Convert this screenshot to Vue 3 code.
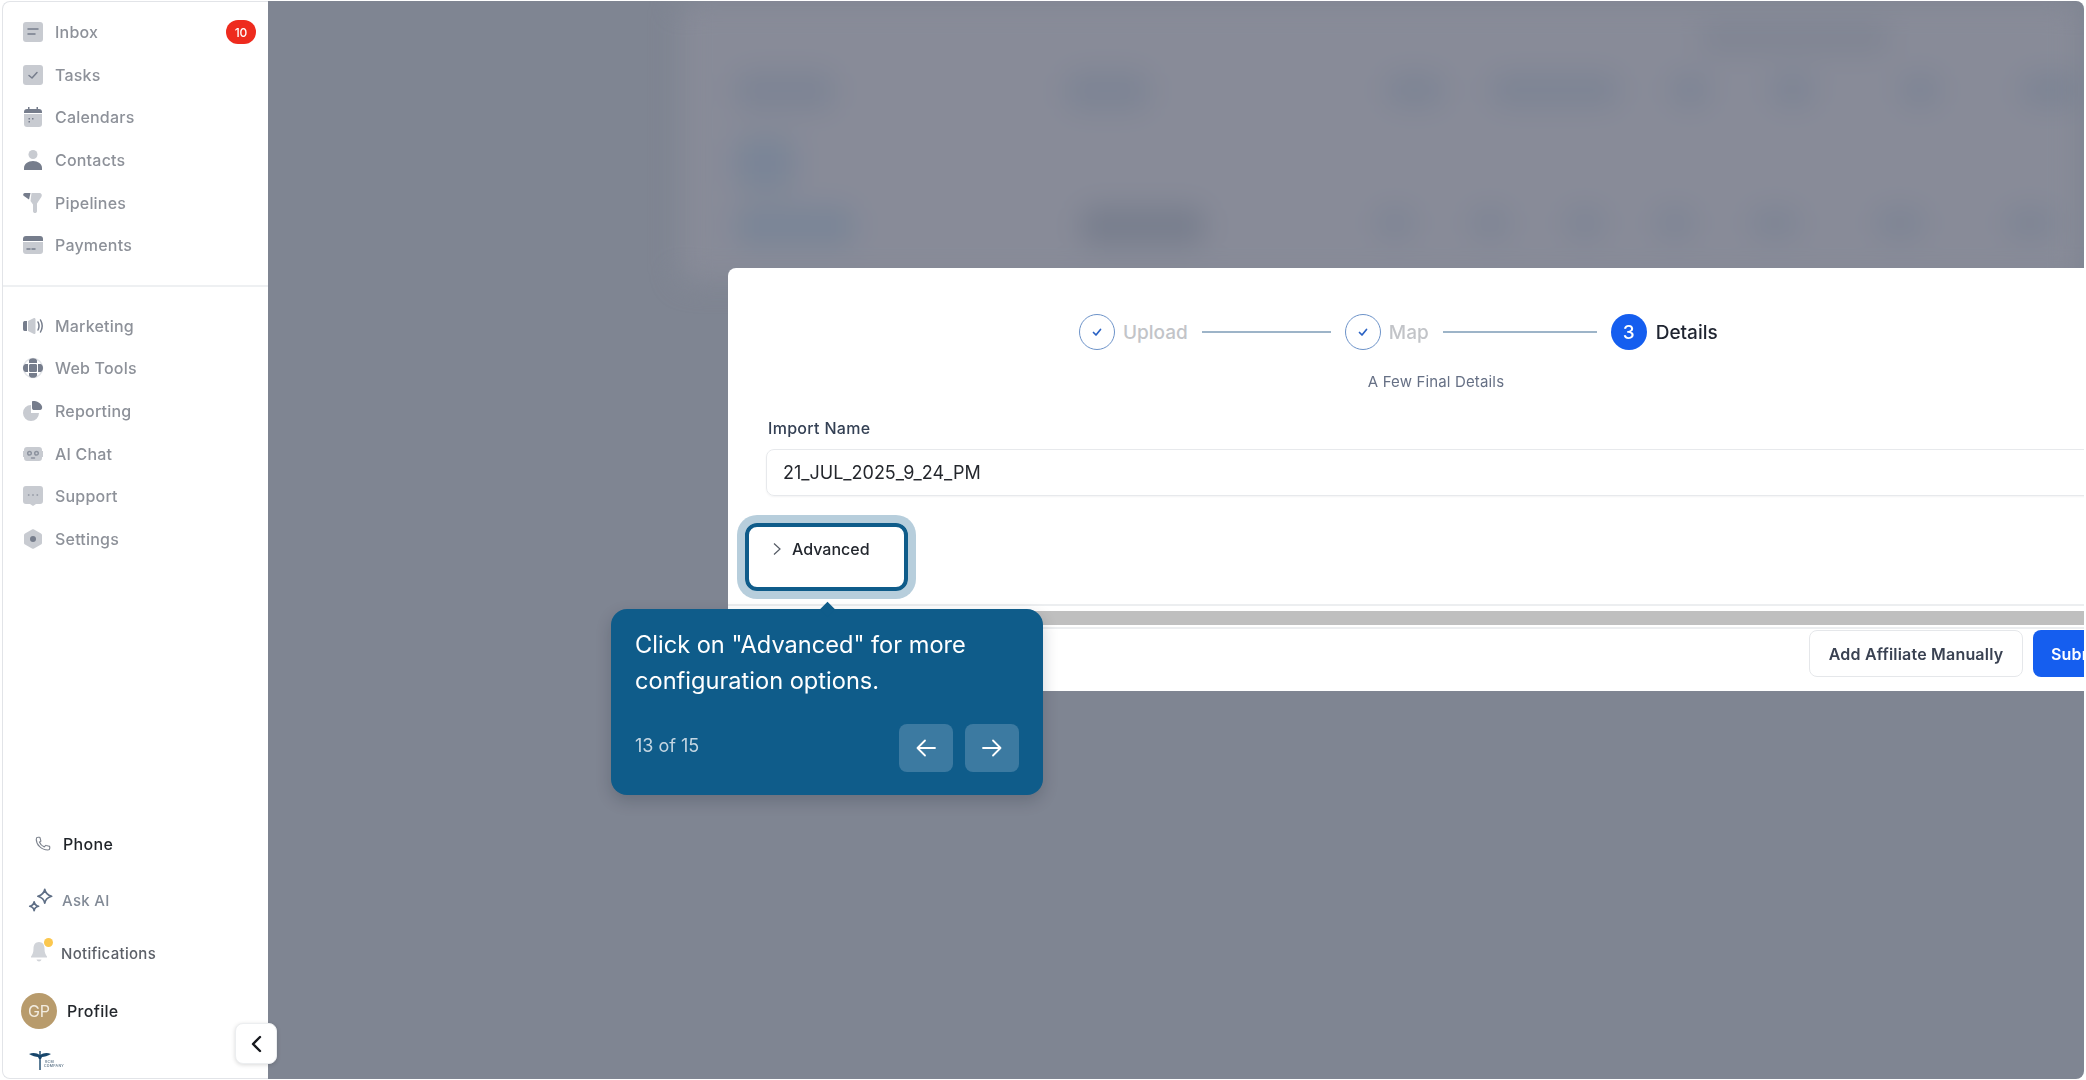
<template>
  <div class="frame">
    <aside class="sidebar">
      <div class="soft">
        <nav class="nav-group">
          <a v-for="item in topItems" :key="item.label" class="nav-item">
            <svg class="nav-icon" viewBox="0 0 20 20">
              <path v-for="(shape, i) in item.shapes" :key="i" :d="shape.d" :fill="shape.fill || 'none'" :stroke="shape.stroke || 'none'" stroke-linecap="round" stroke-linejoin="round" />
            </svg>
            <span>{{ item.label }}</span>
            <span v-if="item.badge" class="badge">{{ item.badge }}</span>
          </a>
        </nav>
        <div class="nav-divider"></div>
        <nav class="nav-group">
          <a v-for="item in midItems" :key="item.label" class="nav-item">
            <svg class="nav-icon" viewBox="0 0 20 20">
              <path v-for="(shape, i) in item.shapes" :key="i" :d="shape.d" :fill="shape.fill || 'none'" :stroke="shape.stroke || 'none'" stroke-linecap="round" stroke-linejoin="round" />
            </svg>
            <span>{{ item.label }}</span>
          </a>
        </nav>

        <div class="bottom">
          <div class="bottom-row phone">
            <svg width="18" height="18" viewBox="0 0 24 24" fill="none" stroke="#7c828d" stroke-width="1.5" stroke-linejoin="round">
              <path d="M3 5.5C3 4 4.2 3 5.5 3h1.6c.5 0 .9.3 1 .8l1 3.9c.1.4 0 .8-.3 1L7.2 9.300c1.100 3 3.500 5.400 6.500 6.500l1.600-1.600c.3-.3.700-.4 1-.3l3.900 1c.5.100.8.500.8 1v1.600c0 1.300-1 2.500-2.500 2.500C10 20 3 13 3 5.500z" />
            </svg>
            <span>Phone</span>
          </div>
          <div class="bottom-row ask">
            <svg width="30" height="30" viewBox="0 0 24 24" fill="none" stroke="#5f6f86" stroke-width="1.4" stroke-linejoin="round">
              <path d="M15 3.500c.5 3 2 4.500 5.500 5.500-3.500 1-5 2.500-5.500 5.500-.5-3-2-4.500-5.500-5.500 3.500-1 5-2.500 5.500-5.500z" />
              <path d="M6.500 13.500c.3 2 1.300 3 3.500 3.500-2.200.5-3.200 1.500-3.500 3.500-.3-2-1.300-3-3.500-3.500 2.200-.5 3.200-1.500 3.500-3.500z" />
            </svg>
            <span>Ask AI</span>
          </div>
          <div class="bottom-row notif">
            <div class="bell">
              <svg width="18" height="22" viewBox="0 0 18 22">
                <path d="M9 1c3.500 0 5.500 2.800 5.500 6.500 0 4 1 6 2.500 8v1H1v-1c1.500-2 2.500-4 2.500-8C3.500 3.800 5.500 1 9 1z" fill="#d1d4d9" />
                <path d="M6.500 18.500h5c-.4 1.300-1.300 2-2.500 2s-2.100-.7-2.500-2z" fill="#d1d4d9" />
              </svg>
              <i class="bell-dot"></i>
            </div>
            <span>Notifications</span>
          </div>
          <div class="bottom-row profile">
            <div class="avatar">GP</div>
            <span>Profile</span>
          </div>
          <div class="logo-row">
            <svg width="36" height="22" viewBox="0 0 36 22">
              <path d="M0 5c4-2 8-1 11 1 3-2 7-3 11-1-3 2-7 3-9 3l-1 2h-2l-1-2C7 8 3 7 0 5z" fill="#17466b" />
              <path d="M11 2v19" stroke="#17466b" stroke-width="1.400" />
              <text x="16" y="14" font-size="3.500" fill="#526b80" font-family="Inter">RCM</text>
              <text x="15" y="18" font-size="3.500" fill="#526b80" font-family="Inter">COMPANY</text>
            </svg>
          </div>
        </div>
      </div>
      <button class="collapse">
        <svg width="14" height="20" viewBox="0 0 14 20" fill="none" stroke="#16181d" stroke-width="2.400" stroke-linecap="round" stroke-linejoin="round">
          <path d="M11 3 4 10l7 7" />
        </svg>
      </button>
    </aside>

    <main class="stage">
      <div class="blurred">
        <i v-for="(blob, i) in blobs" :key="i" class="blob" :style="blob"></i>
      </div>

      <section class="modal">
        <div class="stepper">
          <span class="step-circle done"><svg width="14" height="14" viewBox="0 0 14 14" fill="none" stroke="#2a62c4" stroke-width="1.700" stroke-linecap="round" stroke-linejoin="round"><path d="M3.500 7.500 6 10l4.500-5.500" /></svg></span>
          <span class="step-name upload">Upload</span>
          <span class="step-line line-a"></span>
          <span class="step-circle done"><svg width="14" height="14" viewBox="0 0 14 14" fill="none" stroke="#2a62c4" stroke-width="1.700" stroke-linecap="round" stroke-linejoin="round"><path d="M3.500 7.500 6 10l4.500-5.500" /></svg></span>
          <span class="step-name map">Map</span>
          <span class="step-line line-b"></span>
          <span class="step-circle current">3</span>
          <span class="step-name active">Details</span>
        </div>
        <p class="step-sub">A Few Final Details</p>
        <label class="field-label">Import Name</label>
        <div class="field-input">21_JUL_2025_9_24_PM</div>
        <div class="advanced">
          <svg width="10" height="14" viewBox="0 0 10 14" fill="none" stroke="#555b65" stroke-width="1.200"><path d="M2 1.500 8 7l-6 5.500" /></svg>
          <span>Advanced</span>
        </div>
        <div class="scroll-area">
          <div class="scroll-thumb"></div>
        </div>
        <div class="actions">
          <button class="btn-outline">Add Affiliate Manually</button>
          <button class="btn-primary">Submit</button>
        </div>
      </section>

      <div class="highlight"></div>

      <div class="tour-card">
        <i class="tour-arrow"></i>
        <p class="tour-text">Click on "Advanced" for more configuration options.</p>
        <div class="tour-footer">
          <span class="tour-count">13 of 15</span>
          <div class="tour-buttons">
            <button class="tour-btn">
              <svg width="22" height="20" viewBox="0 0 22 20" fill="none" stroke="#fff" stroke-width="1.800" stroke-linecap="round" stroke-linejoin="round"><path d="M20 10H2.500M10 2.500 2.500 10l7.500 7.500" /></svg>
            </button>
            <button class="tour-btn">
              <svg width="22" height="20" viewBox="0 0 22 20" fill="none" stroke="#fff" stroke-width="1.800" stroke-linecap="round" stroke-linejoin="round"><path d="M2 10h17.500M12 2.500l7.500 7.500-7.500 7.500" /></svg>
            </button>
          </div>
        </div>
      </div>
    </main>
  </div>
</template>

<script setup>
const light = '#c8cbd1'
const dark = '#767d8c'

const topItems = [
  {
    label: 'Inbox',
    badge: 10,
    shapes: [
      { d: 'M3 0h14a3 3 0 0 1 3 3v14a3 3 0 0 1-3 3H3a3 3 0 0 1-3-3V3a3 3 0 0 1 3-3z', fill: light },
      { d: 'M5 7h10M5 12h7', stroke: dark }
    ]
  },
  {
    label: 'Tasks',
    shapes: [
      { d: 'M3 0h14a3 3 0 0 1 3 3v14a3 3 0 0 1-3 3H3a3 3 0 0 1-3-3V3a3 3 0 0 1 3-3z', fill: light },
      { d: 'M6 10.500 9 13l5-5.500', stroke: dark }
    ]
  },
  {
    label: 'Calendars',
    shapes: [
      { d: 'M1 7h18v10a3 3 0 0 1-3 3H4a3 3 0 0 1-3-3z', fill: light },
      { d: 'M1 6V5a3 3 0 0 1 3-3h1V0h1.500v2h7V0H15v2h1a3 3 0 0 1 3 3v1z', fill: dark },
      { d: 'M5.500 11h1.500v1.500H5.500zM9 11h1.500v1.500H9zM5.500 14h1.500v1.500H5.500z', fill: dark }
    ]
  },
  {
    label: 'Contacts',
    shapes: [
      { d: 'M10 0a4.500 4.500 0 1 1 0 9 4.500 4.500 0 0 1 0-9z', fill: light },
      { d: 'M1 20v-2c0-4 4-7 9-7s9 3 9 7v2z', fill: dark }
    ]
  },
  {
    label: 'Pipelines',
    shapes: [
      { d: 'M8.500 0H16c2.500 0 3.500 2 2.300 4L14 10.500v7.500c0 2.800-4 2.800-4 0v-6.500L7.500 8z', fill: light },
      { d: 'M2 0h5.500L6 6.500 .6 2.800C-.4 1.800.4 0 2 0z', fill: dark }
    ]
  },
  {
    label: 'Payments',
    shapes: [
      { d: 'M0 7h20v9a3 3 0 0 1-3 3H3a3 3 0 0 1-3-3z', fill: light },
      { d: 'M3 1h14a3 3 0 0 1 3 3v2H0V4a3 3 0 0 1 3-3z', fill: dark },
      { d: 'M4 14h3M9 14h3', stroke: dark }
    ]
  }
]

const midItems = [
  {
    label: 'Marketing',
    shapes: [
      { d: 'M0 7c0-1 .6-2 1.500-2H4v10H1.500C.6 15 0 14 0 13z', fill: dark },
      { d: 'M5 5l6-3c1 0 1.500.5 1.500 1.500v13c0 1-.5 1.500-1.500 1.500l-6-3z', fill: light },
      { d: 'M15 6c1.300 2.500 1.300 5.500 0 8M17.500 4c2 3.500 2 8.500 0 12', stroke: dark }
    ]
  },
  {
    label: 'Web Tools',
    shapes: [
      { d: 'M10 .5a9.500 9.500 0 1 1 0 19 9.500 9.500 0 0 1 0-19z', stroke: '#e3e5e9' },
      { d: 'M10 .2c2 0 3.500.8 4 2.300V5H6V2.500C6.500 1 8 .2 10 .2zM6 15h8v2.500c-.5 1.500-2 2.300-4 2.300s-3.500-.8-4-2.300zM0 10c0-2 .8-3.500 2.500-4H5v8H2.500C.8 13.500 0 12 0 10zM20 10c0-2-.8-3.500-2.500-4H15v8h2.500c1.700-.5 2.500-2 2.500-4zM7.500 6h5c1 0 1.500.5 1.500 1.500v5c0 1-.5 1.500-1.500 1.500h-5c-1 0-1.500-.5-1.500-1.500v-5C6 6.500 6.500 6 7.500 6z', fill: dark }
    ]
  },
  {
    label: 'Reporting',
    shapes: [
      { d: 'M8 4a8 8 0 1 0 8 8H8z', fill: light },
      { d: 'M10 0c4 0 8 2 9 5.500.5 2-.5 3.500-2 3.500H11c-1 0-2-.5-2-2V1c0-.6.400-1 1-1z', fill: dark }
    ]
  },
  {
    label: 'AI Chat',
    shapes: [
      { d: 'M4 3h12a3 3 0 0 1 3 3v1h1v6h-1v1a3 3 0 0 1-3 3H4a3 3 0 0 1-3-3v-1H0V7h1V6a3 3 0 0 1 3-3z', fill: light },
      { d: 'M6.500 7.500a1.800 1.800 0 1 1 0 3.600 1.800 1.800 0 0 1 0-3.600zM13.500 7.500a1.800 1.800 0 1 1 0 3.600 1.800 1.800 0 0 1 0-3.600zM8.500 14h3', stroke: '#8d939f' }
    ]
  },
  {
    label: 'Support',
    shapes: [
      { d: 'M3 0h14a3 3 0 0 1 3 3v12a3 3 0 0 1-3 3h-4l-3 2-3-2H3a3 3 0 0 1-3-3V3a3 3 0 0 1 3-3z', fill: light },
      { d: 'M5.500 9h.4M9.800 9h.4M14.100 9h.4', stroke: '#8d939f' }
    ]
  },
  {
    label: 'Settings',
    shapes: [
      { d: 'M9 .5c.6-.3 1.400-.3 2 0l7 4c.6.3 1 .9 1 1.600v7.800c0 .7-.4 1.300-1 1.600l-7 4c-.6.3-1.400.3-2 0l-7-4c-.6-.3-1-.9-1-1.600V6.100c0-.7.4-1.300 1-1.600z', fill: light },
      { d: 'M10 7a3 3 0 1 1 0 6 3 3 0 0 1 0-6z', fill: dark }
    ]
  }
]

function blob(x, y, w, h, color) {
  return {
    left: x - 268 + 'px',
    top: y + 'px',
    width: w + 'px',
    height: h + 'px',
    background: color
  }
}

const soft = '#7d8494'
const blue = '#7a8597'

const blobs = [
  blob(680, 0, 1400, 280, '#888b98'),
  blob(1700, 20, 190, 34, '#808593'),
  blob(735, 70, 100, 40, soft),
  blob(1065, 70, 85, 40, soft),
  blob(1385, 72, 60, 34, soft),
  blob(1490, 72, 130, 34, soft),
  blob(1670, 72, 40, 34, soft),
  blob(1770, 72, 45, 34, soft),
  blob(1900, 72, 40, 34, soft),
  blob(2020, 72, 60, 34, soft),
  blob(735, 135, 60, 55, blue),
  blob(735, 205, 120, 40, blue),
  blob(1080, 205, 125, 40, '#787e8d'),
  blob(1375, 207, 40, 30, soft),
  blob(1470, 207, 40, 30, soft),
  blob(1565, 207, 40, 30, soft),
  blob(1655, 207, 40, 30, soft),
  blob(1750, 207, 50, 30, soft),
  blob(1875, 207, 50, 30, soft),
  blob(2005, 207, 50, 30, soft)
]
</script>

<style>
body {
  background: #fff;
}
</style>

<style scoped>
.frame {
  box-sizing: border-box;
  width: 2086px;
  height: 1080px;
  padding: 1px 2px 1px 2px;
  display: flex;
  font-family: Inter, "Liberation Sans", sans-serif;
}

.sidebar {
  box-sizing: border-box;
  width: 266px;
  flex: none;
  position: relative;
  background: #fff;
  border: 1px solid #e2e4e8;
  border-right: none;
  border-radius: 8px 0 0 8px;
}

.soft {
  height: 100%;
  box-sizing: border-box;
  padding-top: 9px;
  display: flex;
  flex-direction: column;
  filter: blur(0.4px);
}

.nav-group {
  display: flex;
  flex-direction: column;
}

.nav-item {
  height: 42.600px;
  display: flex;
  align-items: center;
  gap: 12px;
  padding: 0 12px 0 20px;
  font-size: 16px;
  font-weight: 500;
  letter-spacing: 0.2px;
  color: #8d9199;
}

.nav-icon {
  width: 20px;
  height: 20px;
  flex: none;
  overflow: visible;
  stroke-width: 1.500;
}

.badge {
  margin-left: auto;
  width: 30px;
  height: 24px;
  border-radius: 12px;
  background: #ee2b1e;
  color: #fff;
  font-size: 12px;
  letter-spacing: 0;
  display: flex;
  align-items: center;
  justify-content: center;
}

.nav-divider {
  height: 2px;
  margin: 18px 0 18px;
  background: #eef0f2;
}

.bottom {
  margin-top: auto;
  display: flex;
  flex-direction: column;
  font-size: 15px;
  font-weight: 500;
  letter-spacing: 0.3px;
}

.bottom-row {
  display: flex;
  align-items: center;
}

.phone {
  height: 24px;
  padding-left: 31px;
  gap: 11px;
  font-size: 16px;
  color: #1f2328;
  margin-bottom: 32px;
}

.ask {
  height: 24px;
  padding-left: 23px;
  gap: 6px;
  color: #828a96;
  margin-bottom: 29px;
}

.notif {
  height: 24px;
  padding-left: 27px;
  gap: 12px;
  color: #5c6068;
  margin-bottom: 28px;
}

.bell {
  position: relative;
  width: 19px;
  height: 24px;
}

.bell-dot {
  position: absolute;
  left: 14px;
  top: -3px;
  width: 9px;
  height: 9px;
  border-radius: 50%;
  background: #fbc74e;
}

.profile {
  height: 36px;
  padding-left: 18px;
  gap: 10px;
  font-size: 16px;
  color: #23272c;
}

.avatar {
  width: 36px;
  height: 36px;
  border-radius: 50%;
  background: #b89b6c;
  color: #f2ece0;
  font-size: 16px;
  font-weight: 400;
  letter-spacing: 0;
  display: flex;
  align-items: center;
  justify-content: center;
}

.logo-row {
  padding: 20px 0 7px 26px;
  height: 22px;
}

.collapse {
  position: absolute;
  right: -9px;
  bottom: 14px;
  z-index: 3;
  width: 42px;
  height: 41px;
  padding: 0;
  border: 1px solid #eceef0;
  border-radius: 8px;
  background: #fff;
  box-shadow: 0 1px 4px rgba(0, 0, 0, 0.15);
  display: flex;
  align-items: center;
  justify-content: center;
}

.stage {
  flex: 1;
  position: relative;
  overflow: hidden;
  background: #7f8592;
  border-radius: 0 8px 8px 0;
}

.blurred {
  position: absolute;
  inset: 0;
  filter: blur(14px);
}

.blob {
  position: absolute;
  border-radius: 14px;
}

.modal {
  position: absolute;
  left: 460px;
  top: 267px;
  box-sizing: border-box;
  width: 1416px;
  height: 423px;
  padding-top: 46px;
  background: #fff;
  border-radius: 8px 8px 0 0;
  display: flex;
  flex-direction: column;
  filter: blur(0.35px);
}

.stepper {
  height: 36px;
  padding-left: 351px;
  display: flex;
  align-items: center;
  font-size: 19px;
  font-weight: 500;
}

.step-circle {
  box-sizing: border-box;
  width: 36px;
  height: 36px;
  flex: none;
  border-radius: 50%;
  display: flex;
  align-items: center;
  justify-content: center;
}

.done {
  border: 1.500px solid #6d93c9;
}

.current {
  background: #155eef;
  color: #fff;
}

.step-name {
  color: #c2c4c8;
  margin-left: 8px;
}

.step-name.active {
  color: #1f2430;
  margin-left: 9px;
}

.step-line {
  height: 2px;
  background: #9db4c8;
  margin: 0 14px;
}

.line-a {
  width: 129px;
}

.line-b {
  width: 154px;
}

.step-sub {
  margin: 22px 0 0;
  text-align: center;
  font-size: 15px;
  line-height: 20px;
  letter-spacing: 0.15px;
  color: #667085;
}

.field-label {
  margin: 26px 0 0 40px;
  font-size: 16px;
  line-height: 20px;
  font-weight: 500;
  letter-spacing: 0.3px;
  color: #344054;
}

.field-input {
  box-sizing: border-box;
  margin: 11px 0 0 38px;
  height: 47px;
  padding: 0 16px;
  display: flex;
  align-items: center;
  border: 1.500px solid #e7e9ec;
  border-radius: 8px;
  font-size: 18px;
  color: #24272d;
  box-shadow: 0 1px 2px rgba(16, 24, 40, 0.05);
}

.advanced {
  margin: 43px 0 0 44px;
  height: 20px;
  display: flex;
  align-items: center;
  gap: 10px;
  font-size: 16px;
  font-weight: 500;
  line-height: 20px;
  color: #23272e;
}

.scroll-area {
  margin-top: 45px;
  height: 16px;
  border-top: 2px solid #eceef0;
  padding-top: 5px;
  border-bottom: 2px solid #eceef0;
}

.scroll-thumb {
  height: 14px;
  background: #bfbfbf;
}

.actions {
  display: flex;
  gap: 10px;
  padding-left: 1081px;
  margin-top: 1px;
}

.btn-outline,
.btn-primary {
  height: 47px;
  border-radius: 8px;
  font-family: inherit;
  font-size: 16px;
  font-weight: 600;
  letter-spacing: 0.2px;
  white-space: nowrap;
}

.btn-outline {
  width: 214px;
  padding: 0;
  background: #fff;
  border: 1.500px solid #e5e7ea;
  color: #3a4252;
}

.btn-primary {
  padding: 0 18px;
  background: #155eef;
  border: none;
  color: #fff;
}

.highlight {
  position: absolute;
  left: 477px;
  top: 522px;
  box-sizing: border-box;
  width: 163px;
  height: 68px;
  border: 4px solid #0f5c8a;
  border-radius: 12px;
  box-shadow: 0 0 0 8px rgba(15, 92, 138, 0.3);
}

.tour-card {
  position: absolute;
  left: 343px;
  top: 608px;
  box-sizing: border-box;
  width: 432px;
  height: 186px;
  padding: 18px 24px 0;
  background: #0f5c8a;
  border-radius: 16px;
  box-shadow: 0 6px 16px rgba(16, 24, 40, 0.2);
  color: #fff;
}

.tour-arrow {
  position: absolute;
  left: 211px;
  top: -5px;
  width: 11px;
  height: 11px;
  background: #0f5c8a;
  transform: rotate(45deg);
}

.tour-text {
  margin: 0;
  font-size: 23.600px;
  line-height: 36px;
}

.tour-footer {
  margin-top: 25px;
  display: flex;
  align-items: center;
  justify-content: space-between;
}

.tour-count {
  font-size: 18px;
  color: #c4d6e2;
  margin-top: -5px;
}

.tour-buttons {
  display: flex;
  gap: 12px;
}

.tour-btn {
  width: 54px;
  height: 48px;
  padding: 0;
  border: none;
  border-radius: 8px;
  background: #3c7aa1;
  display: flex;
  align-items: center;
  justify-content: center;
}
</style>
